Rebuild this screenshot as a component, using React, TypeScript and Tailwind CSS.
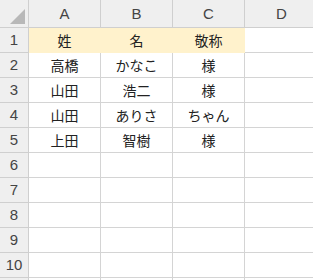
import React from 'react';

const cols = ['A', 'B', 'C', 'D'];

const data: string[][] = [
  ['姓', '名', '敬称', ''],
  ['高橋', 'かなこ', '様', ''],
  ['山田', '浩二', '様', ''],
  ['山田', 'ありさ', 'ちゃん', ''],
  ['上田', '智樹', '様', ''],
  ['', '', '', ''],
  ['', '', '', ''],
  ['', '', '', ''],
  ['', '', '', ''],
  ['', '', '', ''],
  ['', '', '', ''],
];

const App = () => {
  return (
    <div className="h-[280px] w-[313px] overflow-hidden bg-white font-['Noto_Sans_CJK_JP','Noto_Sans',sans-serif]">
      <div className="grid w-[330px] grid-cols-[29px_72px_72px_72px_85px] grid-rows-[28px_repeat(11,25px)]">
        {/* corner */}
        <div className="relative border-b border-r border-[#cfcfcf] bg-[#efefef]">
          <div className="absolute bottom-[3px] right-[3px] h-[15px] w-[15px] bg-[#b8b8b8] [clip-path:polygon(100%_0,100%_100%,0_100%)]" />
        </div>
        {cols.map((c, i) => (
          <div
            key={c}
            className={
              i === 3
                ? "flex items-center justify-start border-b border-[#cfcfcf] bg-[#efefef] pl-[31px] pt-[1px] font-['Liberation_Sans',sans-serif] text-[15px] text-[#444]"
                : "flex items-center justify-center border-b border-r border-[#cfcfcf] bg-[#efefef] pt-[1px] font-['Liberation_Sans',sans-serif] text-[15px] text-[#444]"
            }
          >
            {c}
          </div>
        ))}

        {data.map((row, r) => (
          <React.Fragment key={r}>
            <div className="flex items-center justify-center border-b border-r border-[#cfcfcf] bg-[#efefef] font-['Liberation_Sans',sans-serif] text-[15px] text-[#444]">
              {r < 10 ? r + 1 : ''}
            </div>
            {row.map((v, c) => {
              const filled = r === 0 && c < 3;
              return (
                <div
                  key={c}
                  className={
                    filled
                      ? 'flex items-center justify-center border-b border-r border-[#fff2cc] bg-[#fff2cc] text-[14px] text-[#222]'
                      : 'flex items-center justify-center border-b border-r border-[#d4d4d4] text-[14px] text-[#222]'
                  }
                >
                  {v}
                </div>
              );
            })}
          </React.Fragment>
        ))}
      </div>
    </div>
  );
};

export default App;
